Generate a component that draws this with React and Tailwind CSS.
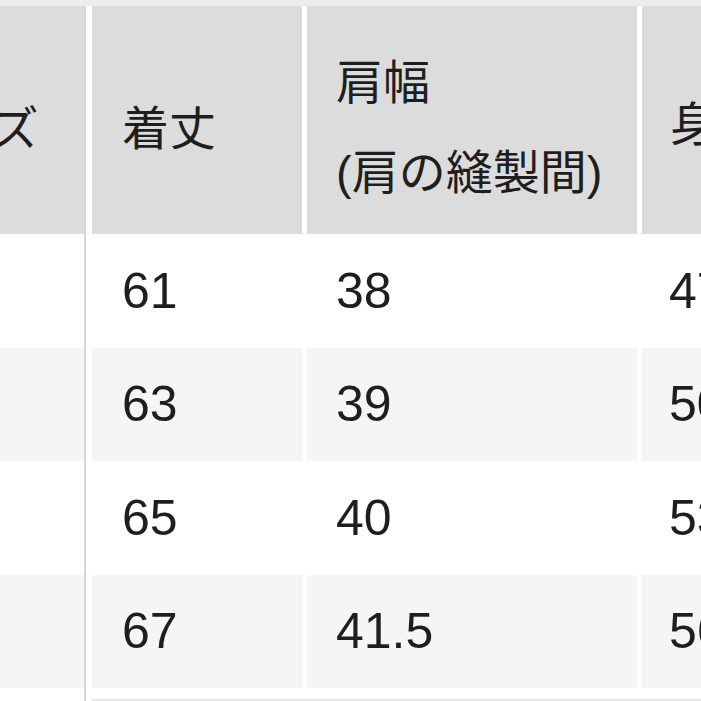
const ROWS = [
  { size: 'S', length: '61', shoulder: '38', chest: '47', striped: false, h: 'h-[114px]' },
  { size: 'M', length: '63', shoulder: '39', chest: '50', striped: true, h: 'h-[113px]' },
  { size: 'L', length: '65', shoulder: '40', chest: '53', striped: false, h: 'h-[114px]' },
  { size: 'XL', length: '67', shoulder: '41.5', chest: '56', striped: true, h: 'h-[113px]' },
];

function Cell({ className = '', children }) {
  return <div className={`flex items-center shrink-0 ${className}`}>{children}</div>;
}

export default function App() {
  return (
    <div className="w-[701px] h-[701px] overflow-hidden bg-white text-[#1e1e1e] font-['Liberation_Sans','Noto_Sans_CJK_JP',sans-serif]">
      <div className="h-[6px] bg-[#ededed]" />
      <div className="flex ml-[-131px] h-[695px]">
        {/* size column, scrolled mostly out of view */}
        <div className="w-[215px] shrink-0 flex flex-col">
          <Cell className="h-[228px] bg-[#dcdcdc] pl-[30px] pt-[18px] text-[47px]">サイズ</Cell>
          {ROWS.map((r) => (
            <Cell key={r.size} className={`${r.h} pl-[30px] text-[50px] ${r.striped ? 'bg-[#f5f5f5]' : ''}`}>
              {r.size}
            </Cell>
          ))}
        </div>

        <div className="w-[2px] mr-[6px] bg-[#d6d6d6] shrink-0" />

        <div className="flex flex-col">
          <div className="flex gap-[5px] h-[228px] text-[47px]">
            <Cell className="w-[210px] bg-[#dcdcdc] pl-[30px] pt-[18px]">着丈</Cell>
            <Cell className="w-[330px] bg-[#dcdcdc] pl-[29px] pt-[16px] leading-[90px]">
              <div>
                肩幅
                <br />
                (肩の縫製間)
              </div>
            </Cell>
            <Cell className="w-[220px] bg-[#dcdcdc] pl-[28px] pt-[10px]">身幅</Cell>
          </div>
          {ROWS.map((r) => (
            <div key={r.size} className={`flex gap-[5px] text-[50px] ${r.h}`}>
              <Cell className={`w-[210px] pl-[30px] ${r.striped ? 'bg-[#f5f5f5]' : ''}`}>{r.length}</Cell>
              <Cell className={`w-[330px] pl-[29px] ${r.striped ? 'bg-[#f5f5f5]' : ''}`}>{r.shoulder}</Cell>
              <Cell className={`w-[220px] pl-[27px] ${r.striped ? 'bg-[#f5f5f5]' : ''}`}>{r.chest}</Cell>
            </div>
          ))}
          <div className="mt-[11px] h-[2px] bg-[#e6e6e6]" />
        </div>
      </div>
    </div>
  );
}
